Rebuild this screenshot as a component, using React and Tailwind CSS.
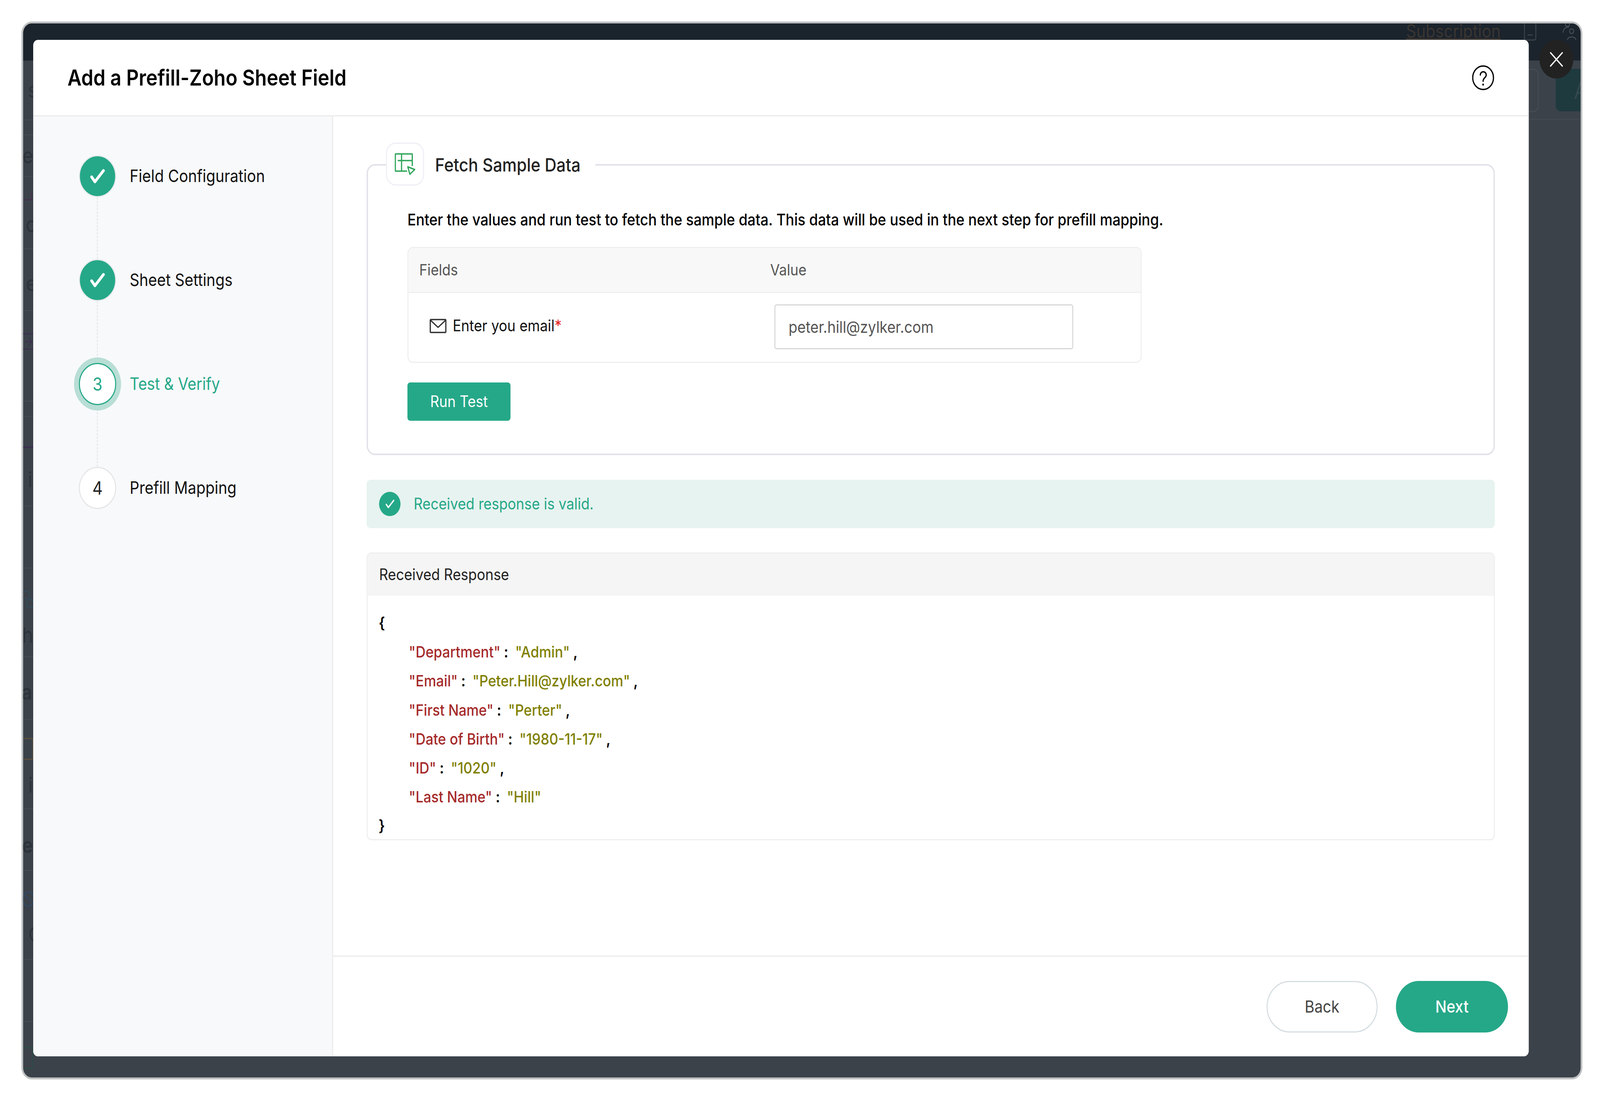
import { Fragment } from 'react';

const jsonRows = [
  ['"Department"', '"Admin"', true],
  ['"Email"', '"Peter.Hill@zylker.com"', true],
  ['"First Name"', '"Perter"', true],
  ['"Date of Birth"', '"1980-11-17"', true],
  ['"ID"', '"1020"', true],
  ['"Last Name"', '"Hill"', false],
];

function Check({ className, width }) {
  return (
    <svg viewBox="0 0 44 40" className={className} fill="none" stroke="#ffffff" strokeWidth={width} strokeLinecap="round" strokeLinejoin="round">
      <path d="M4 22 L14 35 L40 5" />
    </svg>
  );
}

function StepDone({ label }) {
  return (
    <div className="flex h-[108px] items-center pl-[132px]">
      <div className="flex h-[108px] w-[108px] items-center justify-center rounded-full border-[3px] border-[#e9ebed] bg-[#25a888]">
        <Check className="h-[38px] w-[44px]" width={8} />
      </div>
      <span className="ml-[39px] text-[43.5px] text-[#111111]">{label}</span>
    </div>
  );
}

function Connector() {
  return <div className="ml-[184px] h-[158px] w-0 border-l-[3px] border-dashed border-[#e6e7e9]"></div>;
}

function BackdropLeft() {
  const txt = 'flex justify-end whitespace-nowrap text-[54px] leading-none text-[#2c333a]';
  return (
    <div className="flex w-[60px] shrink-0 flex-col">
      <div className="flex h-[153px] flex-col justify-center border-b-2 border-[#454c54]"><div className={txt}>st</div></div>
      <div className="h-[38px] border-b-2 border-[#454c54]"></div>
      <div className="flex h-[107px] flex-col justify-center border-b-2 border-[#454c54]"><div className={txt}>ea</div></div>
      <div className="flex h-[185px] flex-col border-b-2 border-[#454c54]">
        <div className="mt-[38px] h-[22px] w-[26px] rounded-br-[6px] border-r-[3px] border-b-[3px] border-[#46304e]"></div>
        <div className={`${txt} mt-[35px]`}>or</div>
      </div>
      <div className="flex h-[158px] flex-col justify-center border-b-2 border-[#454c54]"><div className={`${txt} pt-[20px]`}>er</div></div>
      <div className="flex h-[232px] flex-col border-b-2 border-[#454c54]">
        <div className="mt-[57px] flex h-[42px] items-center border-y-[3px] border-[#3c3050] text-[32px] text-[#3c3050]">→</div>
        <div className={`${txt} mt-[40px]`}>ti</div>
      </div>
      <div className="h-[39px] border-b-2 border-[#454c54]"></div>
      <div className="flex h-[229px] flex-col border-b-2 border-[#454c54]">
        <div className="mt-[76px] h-[4px] bg-[#3c3050]"></div>
        <div className={`${txt} mt-[54px]`}>id</div>
      </div>
      <div className="h-[159px] border-b-2 border-[#454c54]"></div>
      <div className="flex h-[227px] flex-col border-b-2 border-[#454c54]">
        <svg viewBox="0 0 60 60" className="mt-[50px] h-[60px] w-[60px]" fill="none" stroke="#2f4f5f" strokeWidth="2">
          <circle cx="8" cy="18" r="10" />
          <circle cx="21" cy="40" r="11" />
        </svg>
        <div className={`${txt} mt-[34px] text-[#2a3037]`}>hc</div>
      </div>
      <div className="flex h-[161px] flex-col justify-center border-b-2 border-[#454c54]"><div className={`${txt} pt-[20px] font-semibold`}>ab</div></div>
      <div className="flex h-[228px] flex-col border-b-2 border-[#454c54]">
        <div className="mt-[46px] h-[56px] w-[30px] rounded-r-[6px] border-[3px] border-l-0 border-[#5a4f3c] p-[10px]"></div>
        <div className={`${txt} mt-[38px]`}>in</div>
      </div>
      <div className="flex h-[158px] flex-col justify-center border-b-2 border-[#454c54]"><div className={`${txt} pt-[30px] font-semibold`}>ec</div></div>
      <div className="flex h-[228px] flex-col border-b-2 border-[#454c54]">
        <svg viewBox="0 0 60 50" className="mt-[52px] h-[46px] w-[60px]" fill="none" stroke="#2f4a68" strokeWidth="3">
          <ellipse cx="14" cy="22" rx="17" ry="20" />
          <path d="M2 12 L22 28" />
        </svg>
        <div className={`${txt} mt-[38px] justify-start pl-[15px]`}>C</div>
      </div>
      <div className="h-[159px] border-b-2 border-[#454c54]"></div>
      <div className="mt-[64px] h-[56px] w-[30px] rounded-r-[4px] border-[3px] border-l-0 border-[#2d4c48]"></div>
    </div>
  );
}

function BackdropRight() {
  return (
    <div className="flex w-[151px] shrink-0 flex-col">
      <div className="flex h-[151px] gap-[49px] border-b-2 border-[#444b53] pt-[21px]">
        <div className="h-[111px] w-[30px] rounded-r-[16px] border-[3px] border-l-0 border-[#454c54]"></div>
        <div className="flex h-[109px] flex-1 items-center justify-end overflow-hidden rounded-l-[14px] bg-[#1f3a3f] text-[62px] text-[#37494f]">
          <span className="-mr-[22px] font-light">A</span>
        </div>
      </div>
    </div>
  );
}

export default function App() {
  // the browser can open narrower than the 4626 the layout is measured in
  const fit = window.innerWidth / 4626;

  return (
    <div className="h-[2826px] w-full overflow-hidden">
      <div
        className="h-[2826px] w-[4626px] origin-top-left bg-white pl-[62px] pt-[55px] font-['Inter',sans-serif]"
        style={{ transform: `scale(${fit}, 1)` }}
      >
        <div className="relative h-[2708px] w-[4513px] overflow-hidden rounded-[30px] border-[5px] border-[#bfc1c2] bg-[#3b424a]">
          {/* page behind the dialog */}
          <div className="flex h-[95px] items-start justify-end bg-[#1b232c] pr-[10px]">
            <span className="border-b-[4px] border-[#3a3531] text-[46px] leading-[38px] text-[#3a3531]">Subscription</span>
            <div className="ml-[67px] h-[44px] w-[36px] rounded-b-[6px] border-[3px] border-t-0 border-[#3a4249] pt-[28px] pl-[8px]">
              <div className="h-[3px] w-[14px] bg-[#3a4249]"></div>
            </div>
            <svg viewBox="0 0 42 46" className="ml-[76px] -mt-[2px] h-[46px] w-[42px]" fill="none" stroke="#474e55" strokeWidth="2.5">
              <circle cx="14" cy="4" r="6" />
              <path d="M1 26 C2 14 12 10 18 12" />
              <circle cx="26" cy="22" r="6" />
              <path d="M14 44 C15 34 37 34 38 44" />
            </svg>
          </div>
          <div className="flex justify-between">
            <BackdropLeft />
            <BackdropRight />
          </div>

          {/* close button */}
          <button className="absolute left-[4384px] top-[42px] flex h-[99px] w-[98px] items-center justify-center rounded-full bg-[#222222]">
            <svg viewBox="0 0 38 38" className="h-[38px] w-[38px]" fill="none" stroke="#ffffff" strokeWidth="3.5" strokeLinecap="round">
              <path d="M2 2 L36 36 M36 2 L2 36" />
            </svg>
          </button>

          {/* dialog */}
          <div className="absolute left-[29px] top-[42px] flex h-[2602px] w-[4324px] flex-col overflow-hidden rounded-[14px] bg-white">
            <div className="flex h-[196px] shrink-0 items-center justify-between border-b-[3px] border-[#ebebeb] pl-[99px] pr-[100px]">
              <h1 className="text-[56px] font-semibold text-black">Add a Prefill-Zoho Sheet Field</h1>
              <svg viewBox="0 0 64 64" className="h-[64px] w-[64px]" fill="none" stroke="#000000" strokeWidth="3.5" strokeLinecap="round">
                <circle cx="32" cy="32" r="30" />
                <path d="M24 25 C24 14 41 14 41 25 C41 32 32 32 32 41" />
                <path d="M32 49 L32 50" strokeWidth="4.5" />
              </svg>
            </div>

            <div className="flex min-h-0 flex-1">
              {/* steps */}
              <div className="w-[867px] shrink-0 border-r-[3px] border-[#ebebeb] bg-[#f8f9fb] pt-[99px]">
                <StepDone label="Field Configuration" />
                <Connector />
                <StepDone label="Sheet Settings" />
                <Connector />
                <div className="flex h-[108px] items-center pl-[132px]">
                  <div className="flex h-[108px] w-[108px] items-center justify-center rounded-full border-[3px] border-[#25a888] bg-white text-[46px] text-[#25a888] shadow-[0_0_0_14px_#b8ded5]">3</div>
                  <span className="ml-[39px] text-[43.5px] text-[#25a888]">Test &amp; Verify</span>
                </div>
                <Connector />
                <div className="flex h-[108px] items-center pl-[132px]">
                  <div className="flex h-[108px] w-[108px] items-center justify-center rounded-full border-[3px] border-[#e6e6e6] bg-white text-[46px] text-[#222222]">4</div>
                  <span className="ml-[39px] text-[43.5px] text-[#111111]">Prefill Mapping</span>
                </div>
              </div>

              {/* test pane */}
              <div className="flex min-w-0 flex-1 flex-col">
                <div className="flex-1 pl-[97px] pr-[98px] pt-[67px]">
                  <fieldset className="h-[800px] rounded-[24px] border-[4px] border-[#e2e2ea]">
                    <legend className="ml-[52px] flex h-[114px] items-start bg-white pr-[43px]">
                      <span className="flex h-[110px] w-[110px] items-center justify-center rounded-[28px] border-[3px] border-[#eeeef6]">
                        <svg viewBox="0 0 60 56" className="h-[56px] w-[60px]" fill="none" stroke="#2ea55a" strokeWidth="3.5" strokeLinejoin="round">
                          <path d="M36 46 L3 46 Q2 46 2 45 L2 3 Q2 2 3 2 L50 2 Q51 2 51 3 L51 33" />
                          <path d="M20 2 L20 46 M9 19 L51 19" />
                          <path d="M38 35 L58 42 L44 54 Z" />
                        </svg>
                      </span>
                      <span className="ml-[32px] flex h-[114px] items-center text-[47px] font-medium text-[#222222]">Fetch Sample Data</span>
                    </legend>

                    <div className="pl-[114px]">
                      <p className="mt-[53px] h-[60px] text-[41px] font-medium leading-[60px] text-black">
                        Enter the values and run test to fetch the sample data. This data will be used in the next step for prefill mapping.
                      </p>

                      <div className="mt-[40px] w-[2123px] overflow-hidden rounded-[16px] border-[3px] border-[#efefef]">
                        <div className="flex h-[115px] items-center border-b-[3px] border-[#efefef] bg-[#f8f8f8] pl-[31px] text-[40px] text-[#555555]">
                          <span className="w-[1015px]">Fields</span>
                          <span>Value</span>
                        </div>
                        <div className="flex h-[176px] items-start pl-[61px]">
                          <div className="flex w-[997px] items-center pt-[54px]">
                            <svg viewBox="0 0 49 37" className="h-[37px] w-[49px]" fill="none" stroke="#333333" strokeWidth="3.5" strokeLinejoin="round">
                              <rect x="2" y="2" width="45" height="33" rx="2" />
                              <path d="M3 4 L24.5 22 L46 4" />
                            </svg>
                            <span className="ml-[18px] text-[40.5px] text-[#111111]">
                              Enter you email<span className="text-[#e02020]">*</span>
                            </span>
                          </div>
                          <input
                            readOnly
                            value="peter.hill@zylker.com"
                            className="mt-[29px] h-[115px] w-[864px] rounded-[6px] border-[3px] border-[#d8d8d8] pl-[38px] text-[41.5px] text-[#555555]"
                          />
                        </div>
                      </div>

                      <button className="mt-[50px] flex h-[98px] w-[298px] items-center justify-center rounded-[8px] bg-[#25a888] text-[40.5px] text-white">Run Test</button>
                    </div>
                  </fieldset>

                  <div className="mt-[63px] flex h-[124px] items-center rounded-[12px] bg-[#e7f3f0] pl-[36px]">
                    <div className="flex h-[62px] w-[62px] items-center justify-center rounded-full bg-[#25a888]">
                      <Check className="h-[24px] w-[33px]" width={6} />
                    </div>
                    <span className="ml-[38px] text-[40.5px] text-[#25a888]">Received response is valid.</span>
                  </div>

                  <div className="mt-[62px] h-[737px] overflow-hidden rounded-[14px] border-[3px] border-[#efefef]">
                    <div className="flex h-[108px] items-center bg-[#f5f5f5] pl-[33px] text-[40.5px] text-[#222222]">Received Response</div>
                    <div className="pl-[32px] pt-[33px] text-[39.8px] font-medium leading-[74.2px]">
                      <div className="font-semibold text-black">{'{'}</div>
                      {jsonRows.map(([key, val, comma]) => (
                        <Fragment key={key}>
                          <div className="whitespace-pre pl-[87px]">
                            <span className="text-[#a52a2a]">{key}</span>
                            <span className="font-semibold text-black"> :  </span>
                            <span className="text-[#808000]">{val}</span>
                            {comma && <span className="font-semibold text-black"> ,</span>}
                          </div>
                        </Fragment>
                      ))}
                      <div className="font-semibold text-black">{'}'}</div>
                    </div>
                  </div>
                </div>

                <div className="flex h-[258px] shrink-0 items-center justify-end gap-[53px] border-t-[3px] border-[#ebebeb] pr-[60px]">
                  <button className="h-[132px] w-[321px] rounded-full border-[3px] border-[#d5dde1] bg-white text-[43px] text-[#444444]">Back</button>
                  <button className="h-[132px] w-[324px] rounded-full bg-[#25a888] text-[43px] font-medium text-white">Next</button>
                </div>
              </div>
            </div>
          </div>
        </div>
      </div>
    </div>
  );
}
